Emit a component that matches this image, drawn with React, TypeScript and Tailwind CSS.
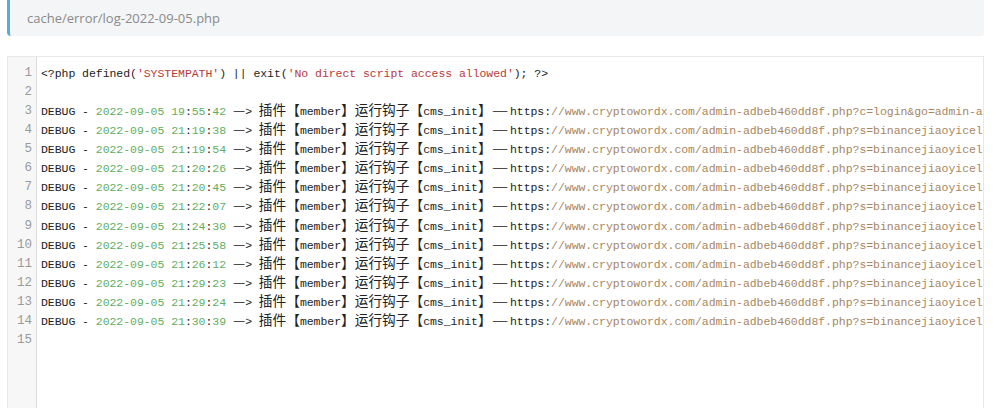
const mono = "font-['Liberation_Mono','Noto_Sans_CJK_SC',monospace]";
const cjk = "font-['Noto_Sans_CJK_SC',sans-serif] text-[13.7px] leading-none tracking-normal";

const times = [
  "19:55:42",
  "21:19:38",
  "21:19:54",
  "21:20:26",
  "21:20:45",
  "21:22:07",
  "21:24:30",
  "21:25:58",
  "21:26:12",
  "21:29:23",
  "21:29:24",
  "21:30:39",
];

function Time({ t }: { t: string }) {
  const [h, m, s] = t.split(":");
  return (
    <>
      <span className="text-[#5fae5f]">{h}</span>:
      <span className="text-[#5fae5f]">{m}</span>:
      <span className="text-[#5fae5f]">{s}</span>
    </>
  );
}

function DebugLine({ t, first }: { t: string; first: boolean }) {
  const query = first
    ? "?c=login&go=admin-adbeb460dd8f.php/index"
    : "?s=binancejiaoyicelue&c=home&m=index";
  return (
    <>
      DEBUG - <span className="text-[#5fae5f]">2022-09-05</span> <Time t={t} />{" "}
      <span className={cjk}>—</span>&gt; <span className={cjk}>插件【</span>member
      <span className={cjk}>】运行钩子【</span>cms_init<span className={cjk}>】</span>
      <span className={`${cjk} inline-block w-[18.3px] origin-left scale-x-[1.33]`}>—</span>
      https:
      <span className="text-[#a8865f]">//www.cryptowordx.com/admin-adbeb460dd8f.php{query}</span>
    </>
  );
}

export default function App() {
  const lines: React.ReactNode[] = [
    <>
      &lt;?php defined(<span className="text-[#b83a3a]">'SYSTEMPATH'</span>) || exit(
      <span className="text-[#b83a3a]">'No direct script access allowed'</span>); ?&gt;
    </>,
    <>&nbsp;</>,
    ...times.map((t, i) => <DebugLine key={t} t={t} first={i === 0} />),
    <>&nbsp;</>,
  ];

  return (
    <div className="h-[408px] w-[1000px] overflow-hidden bg-white pl-[7px] pr-[16px]">
      {/* file path bar */}
      <div className="h-[36px] rounded-br-[3px] rounded-bl-[4px] border-l-[3px] border-[#5aa9dc] bg-[#f4f5f7] pl-[17px] pt-[5px]">
        <span className="font-['Open_Sans',sans-serif] text-[13px] leading-[18px] text-[#8a8a8a]">
          cache/error/log-2022-09-05.php
        </span>
      </div>

      {/* editor */}
      <div className="mt-[20px] flex h-[400px] overflow-hidden border border-[#e8e8e8] bg-white">
        <div className="w-[29px] shrink-0 border-r border-[#dddddd] bg-[#f7f7f7] pt-[6.5px] pr-[4px]">
          {lines.map((_, i) => (
            <div
              key={i}
              className={`${mono} h-[19.15px] text-right text-[12.5px] leading-[19.15px] text-[#9a9a9a]`}
            >
              {i + 1}
            </div>
          ))}
        </div>
        <div className="min-w-0 flex-1 overflow-hidden pt-[6.5px] pl-[4px]">
          {lines.map((l, i) => (
            <div
              key={i}
              className={`${mono} h-[19.15px] whitespace-pre text-[11.5px] leading-[19.15px] tracking-[-0.05px] text-[#222222]`}
            >
              {l}
            </div>
          ))}
        </div>
      </div>
    </div>
  );
}
